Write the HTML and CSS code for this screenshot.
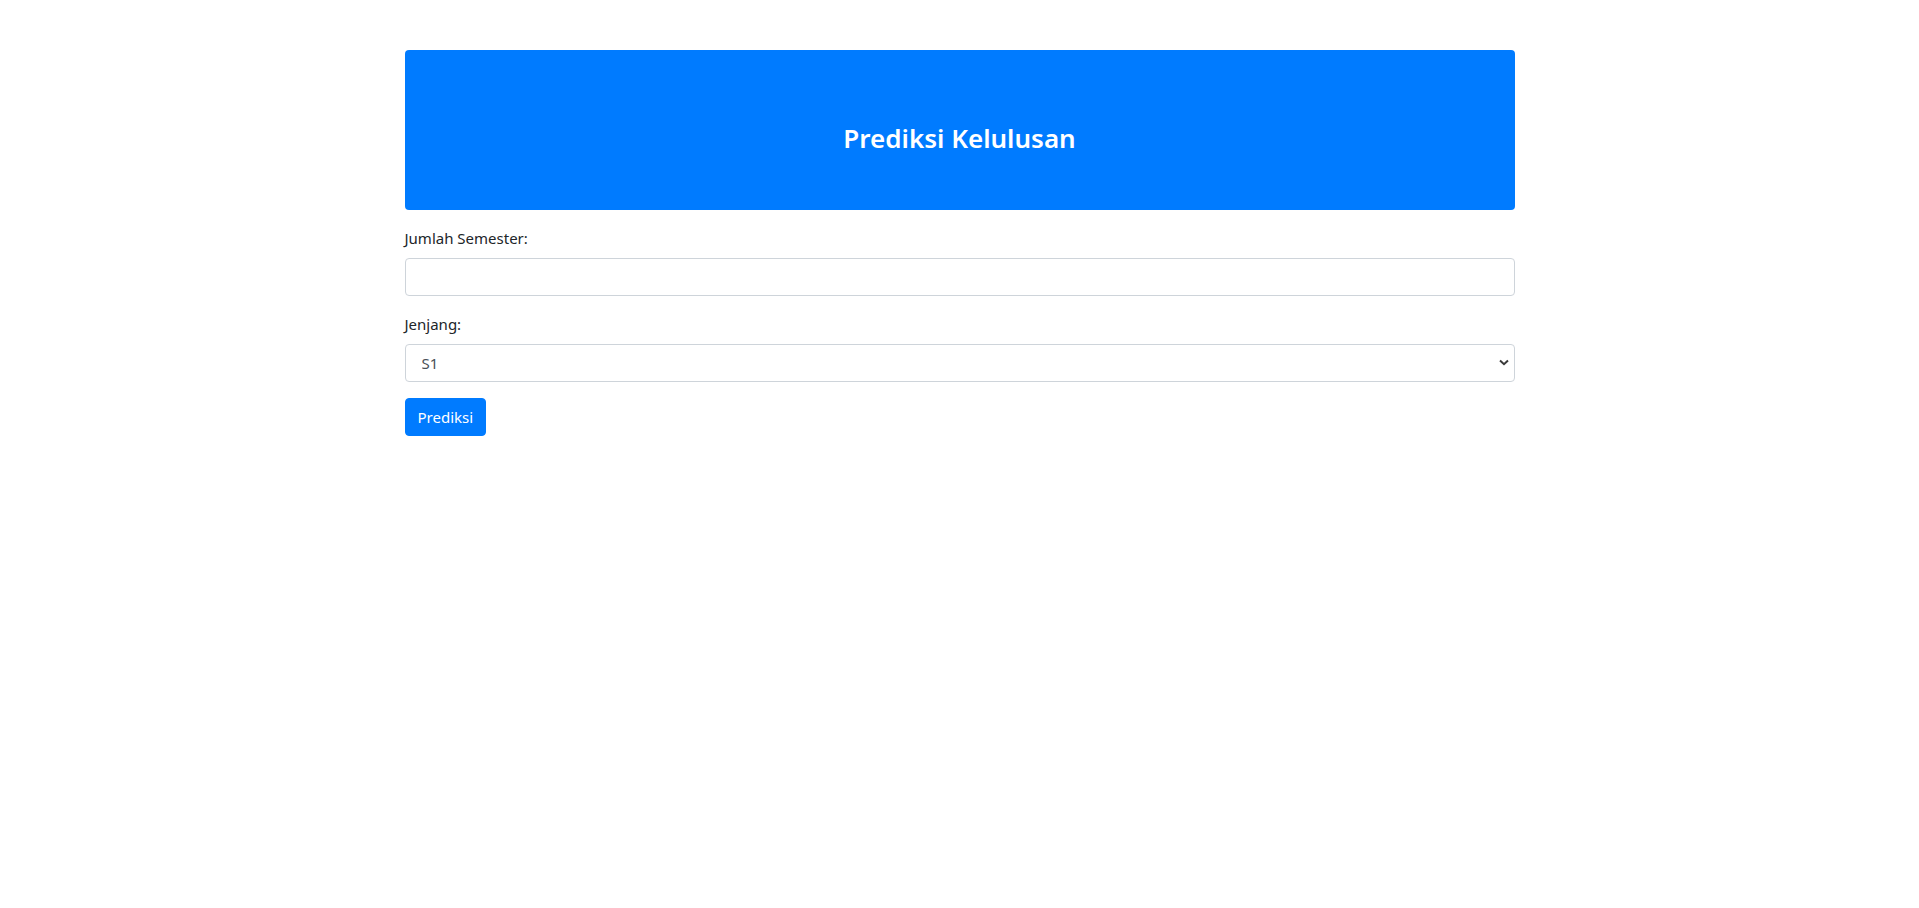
FILE: index.html
```html
<!DOCTYPE html>
<html lang="id">
<head>
<meta charset="utf-8">
<title>Prediksi Kelulusan</title>
<link rel="stylesheet" href="styles.css">
</head>
<body>
<div class="container">
  <div class="jumbotron">
    <h3 class="title">Prediksi Kelulusan</h3>
  </div>
  <form class="form">
    <div class="form-group">
      <label class="label" for="semester">Jumlah Semester:</label>
      <input class="form-control" type="text" id="semester">
    </div>
    <div class="form-group">
      <label class="label" for="jenjang">Jenjang:</label>
      <div class="select-wrap">
        <select class="form-control select" id="jenjang">
          <option>S1</option>
          <option>S2</option>
          <option>D3</option>
        </select>
        <svg class="chevron" width="10" height="7" viewBox="0 0 10 7"><path d="M1 1.5 L5 5.2 L9 1.5" fill="none" stroke="#3a3a3a" stroke-width="2"/></svg>
      </div>
    </div>
    <button class="btn" type="button">Prediksi</button>
  </form>
</div>
</body>
</html>
```

FILE: styles.css
```css
* { box-sizing: border-box; }
html, body { margin: 0; padding: 0; background: #fff; }
body {
  font-family: "Noto Sans", "Open Sans", Arial, sans-serif;
  font-size: 16px;
  line-height: 1.5;
  color: #212529;
}
.container {
  width: 1140px;
  margin: 0 auto;
  padding: 50px 15px 0;
}
.jumbotron {
  background: #007bff;
  color: #fff;
  border-radius: 4px;
  height: 160px;
  padding-top: 73px;
  text-align: center;
  margin-bottom: 16px;
}
.title {
  margin: 0;
  font-size: 26px;
  line-height: 1.2;
  font-weight: 600;
}
.form-group { margin-bottom: 16px; display: flex; flex-direction: column; }
.label { display: block; margin-bottom: 8px; font-size: 15px; line-height: 24px; }
.form-control {
  display: block;
  width: 100%;
  height: 38px;
  padding: 6px 12px;
  font-family: inherit;
  font-size: 15px;
  line-height: 1.5;
  color: #495057;
  background: #fff;
  border: 1px solid #ced4da;
  border-radius: 4px;
  outline: none;
}
.select-wrap { position: relative; }
.select { appearance: none; -webkit-appearance: none; padding-left: 16px; }
.chevron { position: absolute; right: 6px; top: 15px; pointer-events: none; }
.btn {
  display: inline-block;
  height: 38px;
  padding: 6px 12px;
  font-family: inherit;
  font-size: 15px;
  line-height: 1.5;
  color: #fff;
  background: #007bff;
  border: 1px solid #007bff;
  border-radius: 4px;
  cursor: pointer;
}
```
